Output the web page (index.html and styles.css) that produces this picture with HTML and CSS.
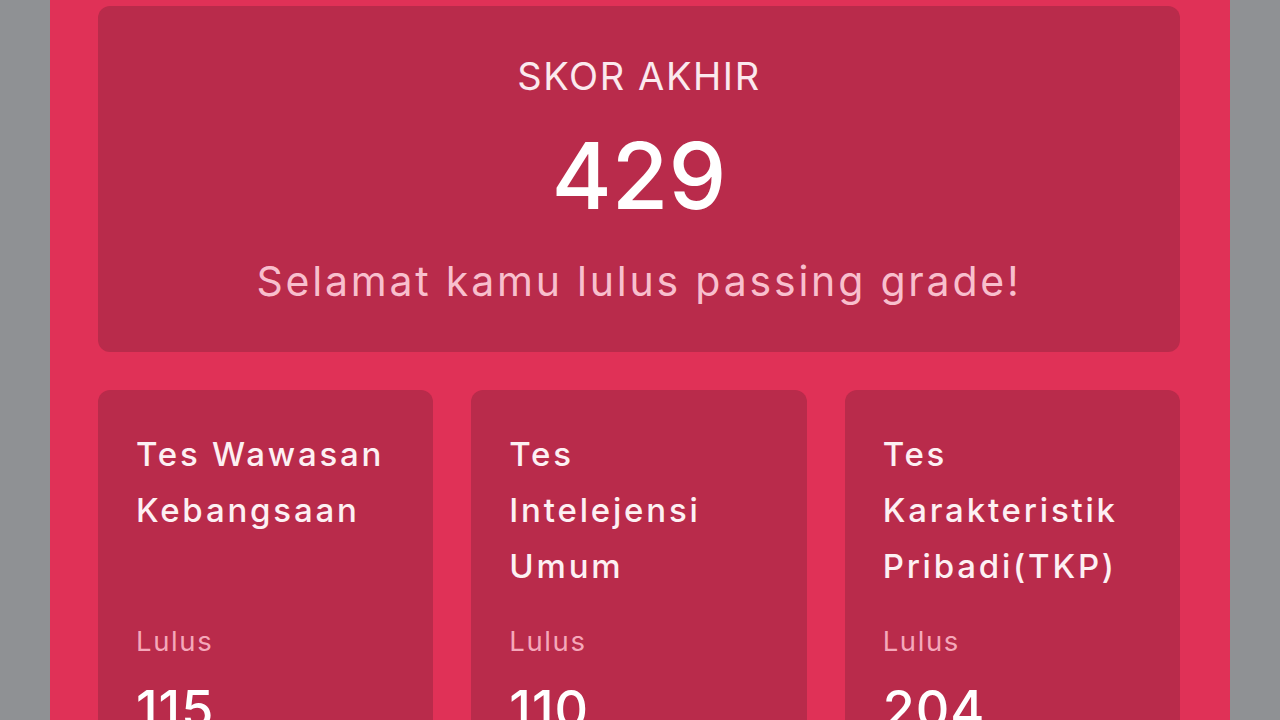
FILE: index.html
```html
<!DOCTYPE html>
<html lang="id">
<head>
<meta charset="utf-8">
<title>Skor Akhir</title>
<link rel="stylesheet" href="styles.css">
</head>
<body>
<div class="frame">
  <section class="score">
    <div class="score-label">SKOR AKHIR</div>
    <div class="score-value">429</div>
    <div class="score-msg">Selamat kamu lulus passing grade!</div>
  </section>
  <section class="tests">
    <div class="test">
      <div class="test-title">Tes Wawasan<br>Kebangsaan<br>&nbsp;</div>
      <div class="test-status">Lulus</div>
      <div class="test-score">115</div>
    </div>
    <div class="test">
      <div class="test-title">Tes<br>Intelejensi<br>Umum</div>
      <div class="test-status">Lulus</div>
      <div class="test-score">110</div>
    </div>
    <div class="test">
      <div class="test-title">Tes<br>Karakteristik<br>Pribadi(TKP)</div>
      <div class="test-status">Lulus</div>
      <div class="test-score">204</div>
    </div>
  </section>
</div>
</body>
</html>
```

FILE: styles.css
```css
html, body {
  margin: 0;
  padding: 0;
  height: 100%;
  overflow: hidden;
}
body {
  background: #8f9194;
  font-family: "Inter", "Liberation Sans", sans-serif;
  color: #fdf0f3;
}
.frame {
  margin-left: 50px;
  width: 1180px;
  box-sizing: border-box;
  height: 720px;
  overflow: hidden;
  background: #e03157;
  padding: 6px 50px 0 48px;
}
.score {
  background: #b92b4b;
  border-radius: 12px;
  height: 346px;
  box-sizing: border-box;
  padding-top: 45px;
  text-align: center;
}
.score-label {
  font-size: 38px;
  line-height: 50px;
  letter-spacing: 1.6px;
  color: #fbe9ee;
}
.score-value {
  font-size: 92px;
  font-weight: 500;
  line-height: 110px;
  margin-top: 20px;
  color: #ffffff;
}
.score-msg {
  font-size: 41px;
  line-height: 50px;
  margin-top: 25px;
  color: #f8bfcd;
  letter-spacing: 2.8px;
}
.tests {
  display: grid;
  grid-template-columns: repeat(3, 1fr);
  column-gap: 38px;
  margin-top: 38px;
}
.test {
  background: #b92b4b;
  border-radius: 12px;
  height: 400px;
  padding: 36px 38px 0;
}
.test-title {
  font-size: 33px;
  line-height: 56px;
  font-weight: 500;
  color: #fdf0f3;
  letter-spacing: 2.8px;
}
.test-status {
  margin-top: 28px;
  font-size: 27.5px;
  line-height: 38px;
  color: #f5a8ba;
  letter-spacing: 1.6px;
}
.test-score {
  margin-top: 20px;
  font-size: 52px;
  line-height: 60px;
  font-weight: 500;
  color: #ffffff;
  letter-spacing: 1px;
}
```
